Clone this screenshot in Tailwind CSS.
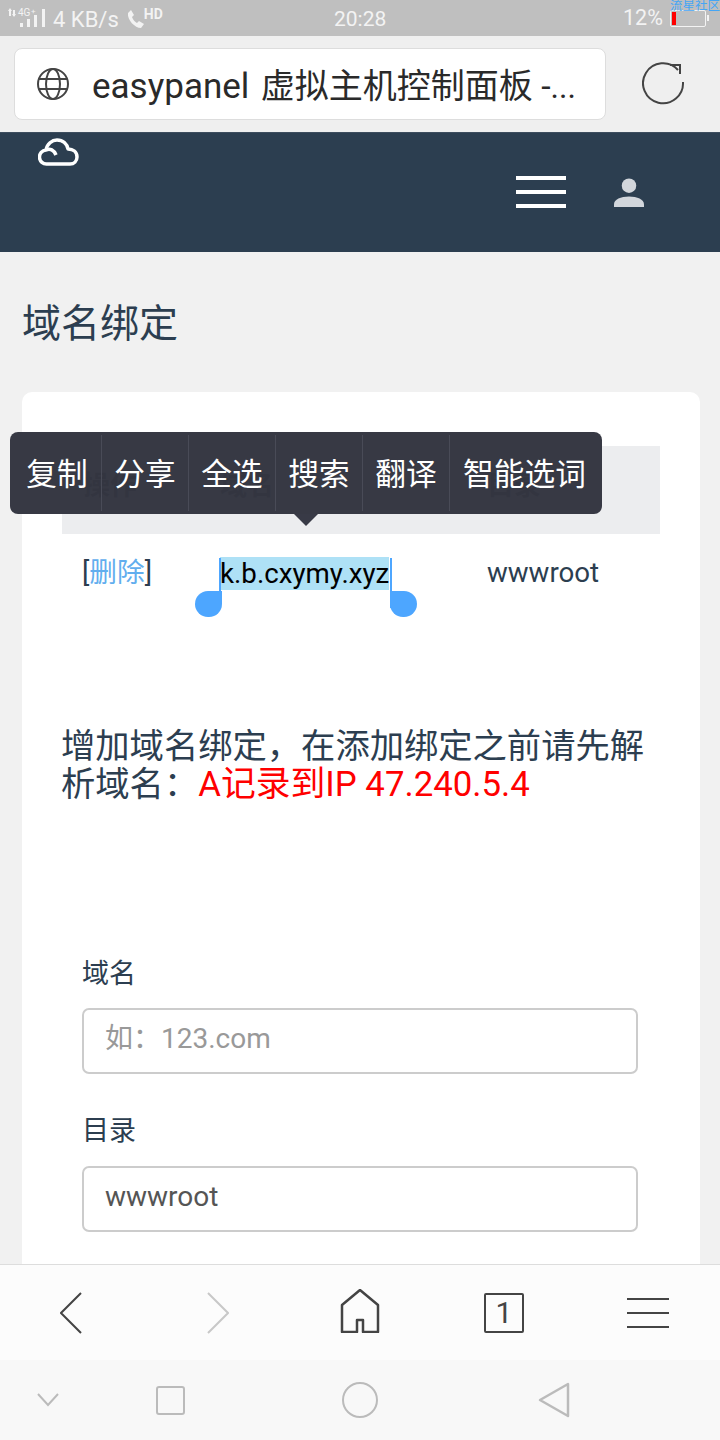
<!DOCTYPE html>
<html lang="zh-CN">
<head>
    <meta charset="UTF-8">
    <meta name="viewport" content="width=device-width, initial-scale=1.0">
    <title>域名绑定</title>
    <script src="https://cdn.jsdelivr.net/npm/@tailwindcss/browser@4"></script>
</head>
<body class="font-['Roboto','Noto_Sans_CJK_SC',sans-serif]">
<div class="relative flex flex-col w-[720px] h-[1440px] overflow-hidden bg-[#f1f1f1]">

    <!-- Status bar -->
    <div class="relative flex items-center shrink-0 h-[36px] bg-[#bfbfbf] text-[#f3f3f3] text-[22px] leading-none">
        <svg class="ml-[8px]" width="38" height="24" viewBox="0 0 38 24" fill="#f3f3f3">
            <rect x="1" y="4" width="2" height="6"/><rect x="5" y="4" width="2" height="6"/>
            <path d="M0 5l2-3 2 3zM4 8h4l-2 3z"/>
            <text x="10" y="10" font-size="10" font-family="Roboto" fill="#f3f3f3">4G</text>
            <text x="23" y="8" font-size="8" font-family="Roboto" fill="#f3f3f3">+</text>
            <rect x="12" y="17" width="3" height="4"/><rect x="19" y="13" width="3" height="8"/><rect x="26" y="9" width="3" height="12"/><rect x="34" y="3" width="3" height="18"/>
        </svg>
        <span class="ml-[7px] mt-[4px]">4 KB/s</span>
        <svg class="ml-[8px] mt-[2px]" width="17" height="18" viewBox="0 0 17 18" fill="#f3f3f3">
            <path d="M1 3l3-3 3 5-2 2c1 3 3 5 5 6l2-2 5 3-3 4C8 18 0 10 1 3z"/>
        </svg>
        <span class="mb-[8px] text-[14px] font-bold">HD</span>
        <span class="absolute left-[334px] top-[9px] text-[21px]">20:28</span>
        <span class="absolute left-[623px] top-[7px] text-[21.500px]">12%</span>
        <div class="absolute left-[670px] top-[10px] w-[36px] h-[17px] border border-[#f3f3f3] rounded-[2px] p-[1px]">
            <div class="w-[4px] h-[13px] bg-[#ff0000]"></div>
        </div>
        <div class="absolute left-[707px] top-[15px] w-[2px] h-[6px] bg-[#f3f3f3]"></div>
        <span class="absolute left-[670px] top-0 text-[12.500px] whitespace-nowrap text-[#45a5f5]">流星社区</span>
    </div>

    <!-- Address bar -->
    <div class="flex items-center shrink-0 h-[96px] bg-[#efefef] pl-[14px]">
        <div class="flex items-center w-[592px] h-[72px] bg-white border border-[#dddddd] rounded-[8px] pl-[22px]">
            <svg width="32" height="32" viewBox="0 0 32 32" fill="none" stroke="#444" stroke-width="2">
                <circle cx="16" cy="16" r="15"/>
                <ellipse cx="16" cy="16" rx="7" ry="15"/>
                <path d="M2 11h28M2 21h28"/>
            </svg>
            <span class="ml-[23px] pt-[4px] text-[34px] leading-none text-[#2a2a2a] whitespace-nowrap"><span class="mr-[3px] text-[35px]">easypanel</span> 虚拟主机控制面板 -<span class="text-[32px]">...</span></span>
        </div>
        <svg class="ml-[36px]" width="44" height="44" viewBox="0 0 44 44" fill="none" stroke="#444" stroke-width="2">
            <path d="M36 8A20 20 0 1 0 41 20"/>
            <path d="M28 3h10v9"/>
        </svg>
    </div>

    <!-- Site nav -->
    <div class="flex items-center shrink-0 h-[120px] bg-[#2c3e50] border-t border-[#3d4d5e] pl-[38px]">
        <svg class="self-start mt-[5px]" width="41" height="28" viewBox="0 0 41 28" fill="none" stroke="#fff" stroke-width="3.500" stroke-linejoin="round">
            <path d="M10 26H9a7 7 0 0 1-1-14c1-6 6-10 11-10 6 0 10 4 11 9 5 0 9 3 9 8 0 4-3 7-7 7z"/>
            <path d="M8 12c4-2 8 0 10 5"/>
        </svg>
        <div class="ml-auto mb-[1px] flex flex-col gap-[10px]">
            <div class="w-[50px] h-[4px] bg-white"></div>
            <div class="w-[50px] h-[4px] bg-white"></div>
            <div class="w-[50px] h-[4px] bg-white"></div>
        </div>
        <svg class="ml-[48px] mr-[76px]" width="30" height="30" viewBox="0 0 31 31" fill="#d2d6dc">
            <circle cx="15.500" cy="8" r="7.500"/>
            <path d="M0 30v-3c0-5 7-8 15.500-8S31 22 31 27v3z"/>
        </svg>
    </div>

    <!-- Page content -->
    <div class="flex-1 overflow-hidden pl-[22px] pr-[20px] text-[#2c3e50]">
        <h1 class="h-[48px] mt-[48px] text-[39px] leading-[48px] font-normal">域名绑定</h1>
        <div class="mt-[44px] bg-white rounded-[10px] pt-[54px] px-[40px] h-[1000px]">
            <div class="grid grid-cols-[137px_267px_194px] w-[598px]">
                <div class="h-[88px] pl-[21px] bg-[#ecedef] text-[27px] font-bold leading-[80px]">操作</div>
                <div class="h-[88px] pl-[21px] bg-[#ecedef] text-[27px] font-bold leading-[80px]">域名</div>
                <div class="h-[88px] pl-[21px] bg-[#ecedef] text-[27px] font-bold leading-[80px]">目录</div>
                <div class="pl-[20px] pt-[23px] text-[27.700px] leading-[32px] whitespace-nowrap">[<span class="text-[#62aeee]">删除</span>]</div>
                <div class="pl-[21px] pt-[23px] text-[27.700px] leading-[32px]">
                    <span class="relative inline-block bg-[#aee1f6] text-black leading-[33px] whitespace-nowrap">k.b.cxymy.xyz
                        <span class="absolute left-[-1px] top-[1px] w-[2px] h-[50px] bg-[#4da6ff]"></span>
                        <span class="absolute left-[-25px] top-[34px] w-[27px] h-[26px] bg-[#4da6ff] rounded-full rounded-tr-none"></span>
                        <span class="absolute right-[-3px] top-[1px] w-[2px] h-[50px] bg-[#4da6ff]"></span>
                        <span class="absolute right-[-28px] top-[34px] w-[27px] h-[26px] bg-[#4da6ff] rounded-full rounded-tl-none"></span>
                    </span>
                </div>
                <div class="pl-[21px] pt-[23px] text-[27.700px] leading-[32px]">wwwroot</div>
            </div>

            <p class="mt-[137px] ml-[-1px] w-[599px] text-[34.300px] leading-[38px]">增加域名绑定，在添加绑定之前请先解析域名：<span class="text-[#ff0000] text-[34.800px]">A记录到IP 47.240.5.4</span></p>

            <form class="mt-[153px] ml-[20px] w-[556px]">
                <label class="block text-[27px] leading-[36px]">域名</label>
                <input class="block mt-[16px] w-full h-[66px] pl-[21px] pb-[6px] bg-white border-2 border-[#cccccc] rounded-[7px] text-[28px] text-[#555] placeholder:text-[#999999]" placeholder="如：123.com">
                <label class="block mt-[39px] text-[27px] leading-[36px]">目录</label>
                <input class="block mt-[17px] w-full h-[66px] pl-[21px] pb-[6px] bg-white border-2 border-[#cccccc] rounded-[7px] text-[28px] text-[#555]" value="wwwroot">
            </form>
        </div>
    </div>

    <!-- Browser toolbar -->
    <div class="grid grid-cols-5 items-center justify-items-center shrink-0 h-[96px] bg-[#fcfcfc] border-t border-[#dddddd]">
        <svg class="mr-[3px]" width="22" height="42" viewBox="0 0 22 42" fill="none" stroke="#444" stroke-width="2"><path d="M21 1L1 21l20 20"/></svg>
        <svg class="ml-[3px]" width="22" height="42" viewBox="0 0 22 42" fill="none" stroke="#c8c8c8" stroke-width="2"><path d="M1 1l20 20L1 41"/></svg>
        <svg class="mb-[3px]" width="40" height="44" viewBox="0 0 40 44" fill="none" stroke="#444" stroke-width="2.500" stroke-linejoin="round"><path d="M2 16L20 1l18 15v27H23V31h-6v12H2z"/></svg>
        <div class="flex items-center justify-center w-[40px] h-[40px] border-2 border-[#444] rounded-[2px] text-[30px] leading-none text-[#444]">1</div>
        <div class="flex flex-col gap-[12px]">
            <div class="w-[42px] h-[2px] bg-[#444]"></div>
            <div class="w-[42px] h-[2px] bg-[#444]"></div>
            <div class="w-[42px] h-[2px] bg-[#444]"></div>
        </div>
    </div>

    <!-- System nav -->
    <div class="flex items-center shrink-0 h-[80px] bg-[#f8f8f8] pl-[37px]">
        <svg width="22" height="14" viewBox="0 0 22 14" fill="none" stroke="#bbb" stroke-width="2"><path d="M1 1l10 11L21 1"/></svg>
        <div class="ml-[97px] w-[29px] h-[29px] border-2 border-[#bbb] rounded-[3px]"></div>
        <div class="ml-[157px] w-[36px] h-[36px] border-2 border-[#bbb] rounded-full"></div>
        <svg class="ml-[160px]" width="32" height="36" viewBox="0 0 32 36" fill="none" stroke="#bbb" stroke-width="2.500" stroke-linejoin="round"><path d="M2 18L30 2v32z"/></svg>
    </div>

    <!-- Text selection menu -->
    <div class="absolute left-[10px] top-[432px] flex items-center w-[592px] h-[82px] bg-[#333540]/[.98] rounded-[8px] text-[30.700px] leading-none text-white whitespace-nowrap">
        <div class="flex items-center justify-center w-[92px] h-[76px] pl-[3px] pt-[5px] border-r border-[#494b57]">复制</div>
        <div class="flex items-center justify-center w-[87px] h-[76px] pt-[5px] border-r border-[#494b57]">分享</div>
        <div class="flex items-center justify-center w-[87px] h-[76px] pt-[5px] border-r border-[#494b57]">全选</div>
        <div class="flex items-center justify-center w-[87px] h-[76px] pt-[5px] border-r border-[#494b57]">搜索</div>
        <div class="flex items-center justify-center w-[87px] h-[76px] pt-[5px] border-r border-[#494b57]">翻译</div>
        <div class="flex items-center justify-center flex-1 h-[76px] pt-[5px] pr-[3px]">智能选词</div>
        <div class="absolute left-[284px] top-[82px] border-x-[12px] border-x-transparent border-t-[12px] border-t-[#383a46]"></div>
    </div>
</div>
</body>
</html>
